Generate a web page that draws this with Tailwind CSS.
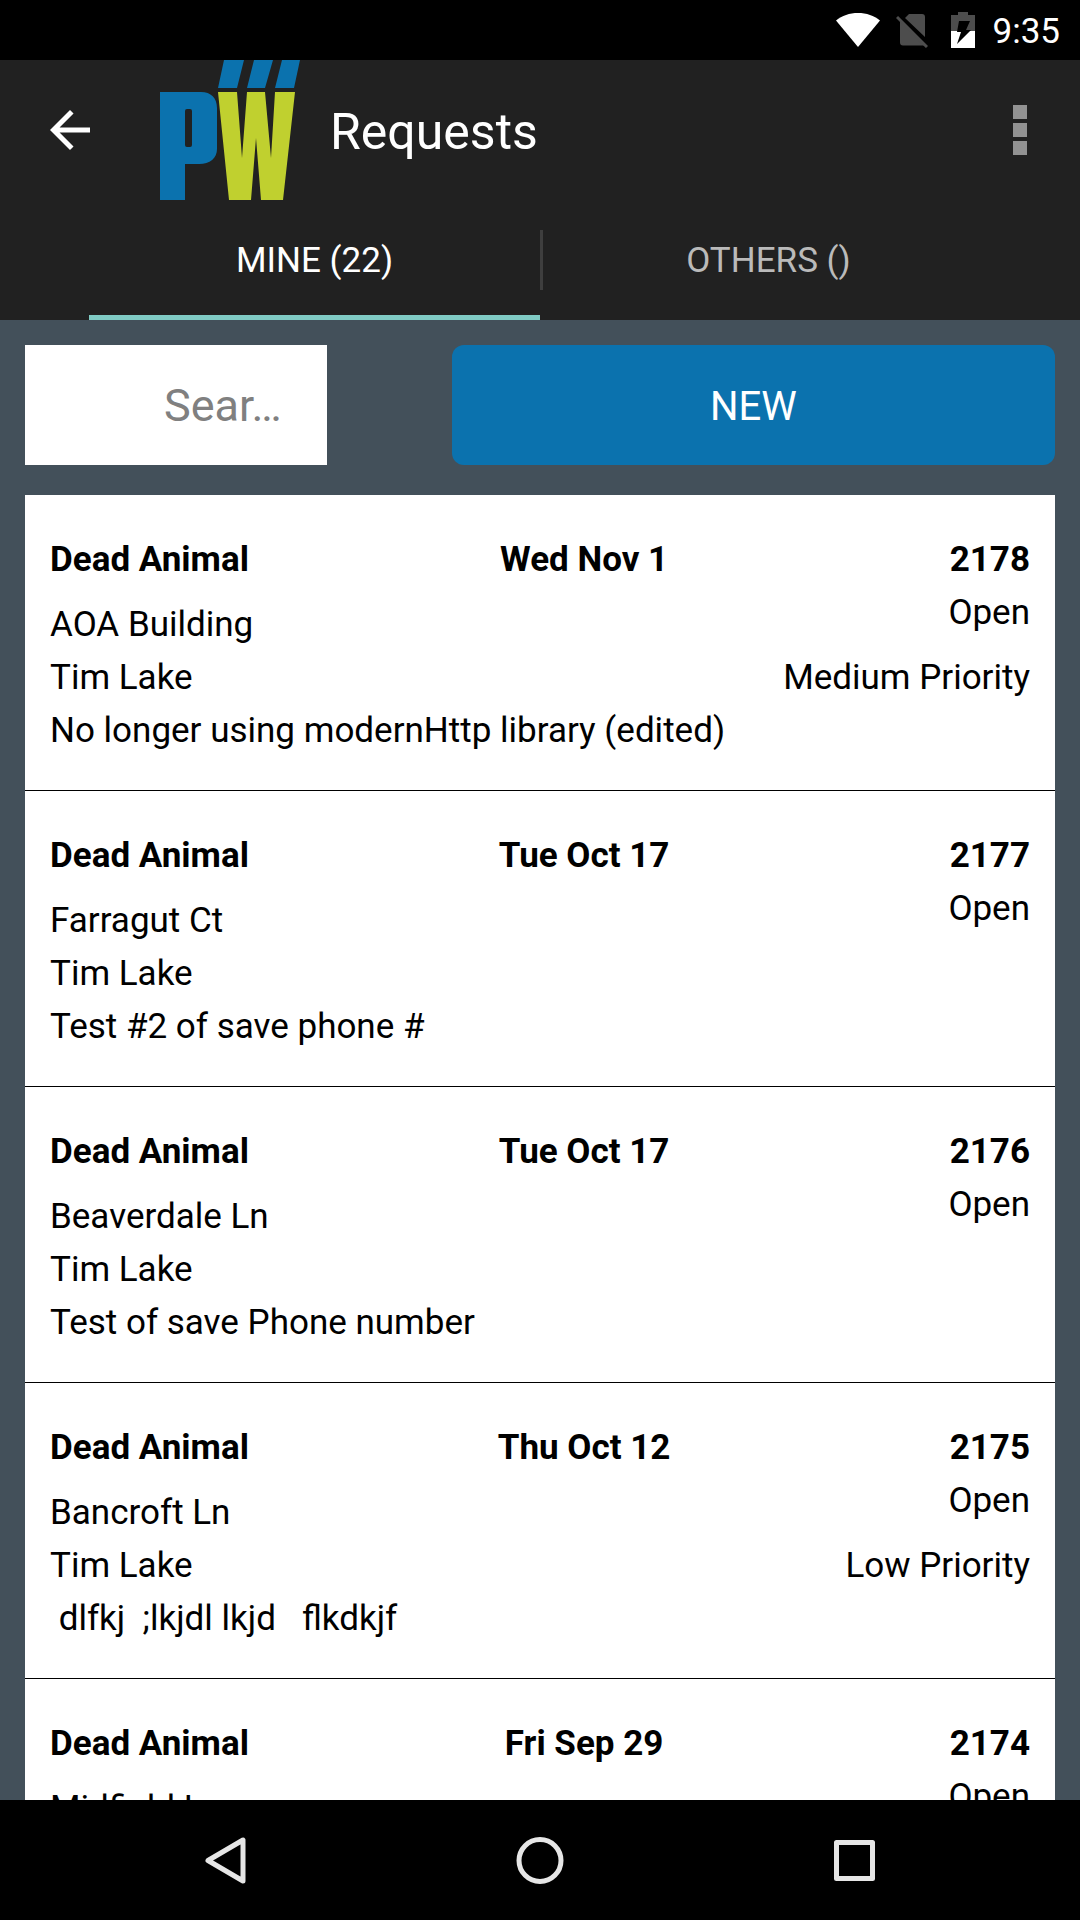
<!DOCTYPE html>
<html lang="en">
<head>
    <meta charset="UTF-8">
    <meta name="viewport" content="width=device-width, initial-scale=1.0">
    <title>Requests</title>
    <!-- Tailwind CSS CDN -->
    <script src="https://cdn.jsdelivr.net/npm/@tailwindcss/browser@4"></script>
</head>
<body class="h-screen flex flex-col overflow-hidden bg-[#43505a] font-['Roboto',sans-serif] text-[35px] text-black">

    <!-- Status bar -->
    <div class="shrink-0 h-[60px] bg-black text-white flex items-center justify-end pr-5">
        <svg class="w-[44px] h-[36px] mr-4" viewBox="0 0 44 36" fill="#fff" aria-hidden="true">
            <path d="M0 8.500C6 3.500 13.500 1 22 1s16 2.500 22 7.500L22 35z"/>
        </svg>
        <svg class="w-[32px] h-[36px] mr-[23px]" viewBox="0 0 32 36" aria-hidden="true">
            <path d="M13 2h13a3 3 0 0 1 3 3v20L9 6zM4 9l25 24.500H7a3 3 0 0 1-3-3z" fill="#4d4d4d"/>
            <path d="M1 5l30 30" stroke="#4d4d4d" stroke-width="3"/>
        </svg>
        <svg class="w-[24px] h-[36px] mr-[18px]" viewBox="0 0 24 36" aria-hidden="true">
            <path d="M7 0h10v3h7v16H0V3h7z" fill="#4d4d4d"/>
            <path d="M0 19h24v17H0z" fill="#fff"/>
            <path d="M8 9h11l-4 9h5L6 32l4-12H6z" fill="#000"/>
        </svg>
        <span class="leading-none pt-[2px]">9:35</span>
    </div>

    <header class="shrink-0 bg-[#212121] text-white">
        <!-- Title bar -->
        <div class="h-[140px] flex items-center pl-10 pr-[45px]">
            <button type="button" aria-label="Back" class="mr-[60px]">
                <svg class="block w-[60px] h-[60px]" viewBox="0 0 24 24" fill="#fff">
                    <path d="M20 11H7.830l5.590-5.590L12 4l-8 8 8 8 1.410-1.410L7.830 13H20v-2z"/>
                </svg>
            </button>
            <svg class="w-[140px] h-[140px] mr-[30px]" viewBox="0 0 140 140" role="img" aria-label="PW">
                <g fill="#0b72ae">
                    <path d="M64 0h20l-7 28H58zM94 0h19l-8 28H87zM122 0h18l-6 28h-19z"/>
                    <path fill-rule="evenodd" d="M0 32h41c10 0 16 6 16 16v41c0 9-7 15-18 15H25v36H0zM25 51v34q0 2 2 2h3q2 0 2-2V51q0-2-2-2h-3q-2 0-2 2z"/>
                </g>
                <path d="M58 32h19l5 66 5-66h18l6 66 4-66h20l-12 108h-22l-5-62-5 62H69z" fill="#c0d02f"/>
            </svg>
            <h1 class="text-[50px] leading-none pt-1">Requests</h1>
            <button type="button" aria-label="More options" class="ml-auto p-2">
                <svg class="block w-[14px] h-[50px]" viewBox="0 0 14 50" fill="#929292">
                    <path d="M0 0h14v14H0zM0 18h14v14H0zM0 36h14v14H0z"/>
                </svg>
            </button>
        </div>

        <!-- Tabs -->
        <div role="tablist" class="h-[120px] flex items-center pl-[89px] pr-[86px]">
            <button type="button" role="tab" aria-selected="true" class="flex-1 h-full pt-2 border-b-[5px] border-[#80cbc4]">MINE (22)</button>
            <span class="w-[3px] h-[60px] bg-[#3e3e3e]"></span>
            <button type="button" role="tab" aria-selected="false" class="flex-1 h-full pt-[3px] text-[#bababa]">OTHERS ()</button>
        </div>
    </header>

    <main class="flex-1 min-h-0 flex flex-col px-[25px] pt-[25px]">
        <div class="shrink-0 grid grid-cols-[1fr_2fr] gap-[125px] mb-[30px]">
            <input type="text" aria-label="Search" placeholder="Sear…"
                   class="w-full min-w-0 h-[120px] bg-white text-right text-[45px] pr-[45px] placeholder:text-[#808080] outline-none">
            <button type="button" class="h-[120px] pt-1 rounded-xl bg-[#0b72ae] text-white text-[40px]">NEW</button>
        </div>

        <ul class="flex-1 min-h-0 overflow-hidden bg-white leading-[53px]">
            <li class="px-[25px] pt-[38px] pb-[33px] border-b border-black">
                <div class="grid grid-cols-[39fr_31fr_30fr] font-bold">
                    <h2>Dead Animal</h2>
                    <span class="text-center">Wed Nov 1</span>
                    <span class="text-right">2178</span>
                </div>
                <div class="flex justify-between">
                    <div class="pt-3">
                        <p>AOA Building</p>
                        <p>Tim Lake</p>
                        <p>No longer using modernHttp library (edited)</p>
                    </div>
                    <div class="text-right">
                        <p>Open</p>
                        <p class="mt-3">Medium Priority</p>
                    </div>
                </div>
            </li>
            <li class="px-[25px] pt-[38px] pb-[33px] border-b border-black">
                <div class="grid grid-cols-[39fr_31fr_30fr] font-bold">
                    <h2>Dead Animal</h2>
                    <span class="text-center">Tue Oct 17</span>
                    <span class="text-right">2177</span>
                </div>
                <div class="flex justify-between">
                    <div class="pt-3">
                        <p>Farragut Ct</p>
                        <p>Tim Lake</p>
                        <p>Test #2 of save phone #</p>
                    </div>
                    <p class="text-right">Open</p>
                </div>
            </li>
            <li class="px-[25px] pt-[38px] pb-[33px] border-b border-black">
                <div class="grid grid-cols-[39fr_31fr_30fr] font-bold">
                    <h2>Dead Animal</h2>
                    <span class="text-center">Tue Oct 17</span>
                    <span class="text-right">2176</span>
                </div>
                <div class="flex justify-between">
                    <div class="pt-3">
                        <p>Beaverdale Ln</p>
                        <p>Tim Lake</p>
                        <p>Test of save Phone number</p>
                    </div>
                    <p class="text-right">Open</p>
                </div>
            </li>
            <li class="px-[25px] pt-[38px] pb-[33px] border-b border-black">
                <div class="grid grid-cols-[39fr_31fr_30fr] font-bold">
                    <h2>Dead Animal</h2>
                    <span class="text-center">Thu Oct 12</span>
                    <span class="text-right">2175</span>
                </div>
                <div class="flex justify-between">
                    <div class="pt-3">
                        <p>Bancroft Ln</p>
                        <p>Tim Lake</p>
                        <p class="whitespace-pre"> dlfkj  ;lkjdl lkjd   flkdkjf</p>
                    </div>
                    <div class="text-right">
                        <p>Open</p>
                        <p class="mt-3">Low Priority</p>
                    </div>
                </div>
            </li>
            <li class="px-[25px] pt-[38px] pb-[33px] border-b border-black">
                <div class="grid grid-cols-[39fr_31fr_30fr] font-bold">
                    <h2>Dead Animal</h2>
                    <span class="text-center">Fri Sep 29</span>
                    <span class="text-right">2174</span>
                </div>
                <div class="flex justify-between">
                    <p class="pt-3">Midfield Ln</p>
                    <p class="text-right">Open</p>
                </div>
            </li>
        </ul>
    </main>

    <!-- System navigation -->
    <nav class="shrink-0 h-[120px] bg-black flex px-[67px]">
        <button type="button" aria-label="Back" class="flex-1 flex items-center justify-center">
            <svg class="w-[48px] h-[48px]" viewBox="0 0 48 48" fill="none" stroke="#e6e6e6" stroke-width="5" stroke-linejoin="round">
                <path d="M42 4v41L7 24.500z"/>
            </svg>
        </button>
        <button type="button" aria-label="Home" class="flex-1 flex items-center justify-center">
            <svg class="w-[48px] h-[48px]" viewBox="0 0 48 48" fill="none" stroke="#e6e6e6" stroke-width="5">
                <circle cx="24" cy="24.500" r="21"/>
            </svg>
        </button>
        <button type="button" aria-label="Recent apps" class="flex-1 flex items-center justify-center">
            <svg class="w-[48px] h-[48px]" viewBox="0 0 48 48" fill="none" stroke="#e6e6e6" stroke-width="5" stroke-linejoin="round">
                <path d="M5.500 6.500h36v36h-36z"/>
            </svg>
        </button>
    </nav>

</body>
</html>
